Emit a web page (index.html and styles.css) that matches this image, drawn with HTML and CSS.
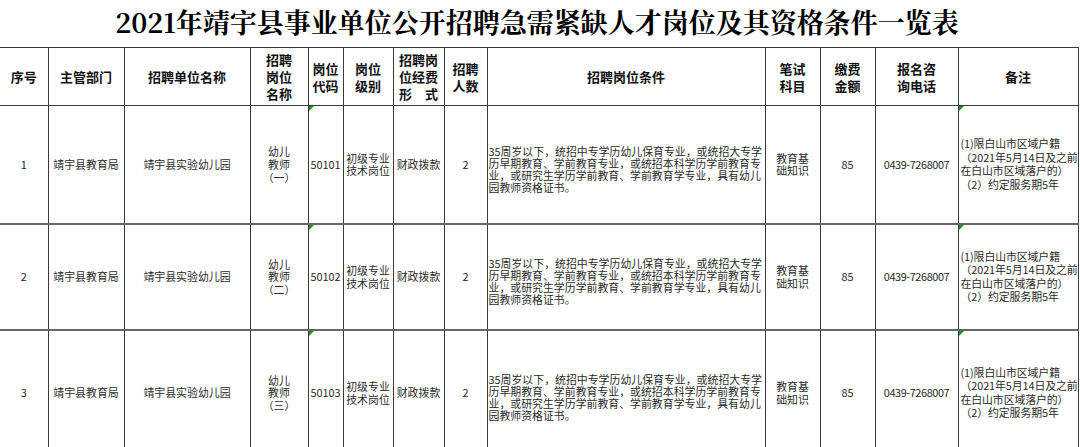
FILE: index.html
```html
<!DOCTYPE html>
<html lang="zh-CN">
<head>
<meta charset="utf-8">
<title>2021年靖宇县事业单位公开招聘急需紧缺人才岗位及其资格条件一览表</title>
<link rel="stylesheet" href="styles.css">
</head>
<body>
<div class="sheet">
  <h1 class="title">2021年靖宇县事业单位公开招聘急需紧缺人才岗位及其资格条件一览表</h1>
  <table class="grid">
    <colgroup>
      <col class="c-no"><col class="c-dept"><col class="c-unit"><col class="c-pos"><col class="c-code"><col class="c-level"><col class="c-fund"><col class="c-num"><col class="c-cond"><col class="c-exam"><col class="c-fee"><col class="c-tel"><col class="c-note">
    </colgroup>
    <thead>
      <tr class="head">
        <th class="first">序号</th>
        <th>主管部门</th>
        <th class="gl">招聘单位名称</th>
        <th class="gl">招聘<br>岗位<br>名称</th>
        <th>岗位<br>代码</th>
        <th>岗位<br>级别</th>
        <th class="gl">招聘岗<br>位经费<br>形&emsp;式</th>
        <th class="gl">招聘<br>人数</th>
        <th class="gl">招聘岗位条件</th>
        <th class="gl">笔试<br>科目</th>
        <th>缴费<br>金额</th>
        <th>报名咨<br>询电话</th>
        <th>备注</th>
      </tr>
    </thead>
    <tbody>
      <tr class="r1">
        <td class="first">1</td>
        <td>靖宇县教育局</td>
        <td class="gl">靖宇县实验幼儿园</td>
        <td class="gl">幼儿<br>教师<br>（一）</td>
        <td class="mark">50101</td>
        <td>初级专业<br>技术岗位</td>
        <td class="gl">财政拨款</td>
        <td class="gl">2</td>
        <td class="gl left cond">35周岁以下，统招中专学历幼儿保育专业，或统招大专学<br>历早期教育、学前教育专业，或统招本科学历学前教育专<br>业，或研究生学历学前教育、学前教育学专业，具有幼儿<br>园教师资格证书。</td>
        <td class="gl">教育基<br>础知识</td>
        <td>85</td>
        <td class="tel">0439-7268007</td>
        <td class="left note mark">(1)限白山市区域户籍<br>（2021年5月14日及之前<br>在白山市区域落户的）<br>（2）约定服务期5年</td>
      </tr>
      <tr class="r2">
        <td class="first">2</td>
        <td>靖宇县教育局</td>
        <td class="gl">靖宇县实验幼儿园</td>
        <td class="gl">幼儿<br>教师<br>（二）</td>
        <td class="mark">50102</td>
        <td>初级专业<br>技术岗位</td>
        <td class="gl">财政拨款</td>
        <td class="gl">2</td>
        <td class="gl left cond">35周岁以下，统招中专学历幼儿保育专业，或统招大专学<br>历早期教育、学前教育专业，或统招本科学历学前教育专<br>业，或研究生学历学前教育、学前教育学专业，具有幼儿<br>园教师资格证书。</td>
        <td class="gl">教育基<br>础知识</td>
        <td>85</td>
        <td class="tel">0439-7268007</td>
        <td class="left note mark">(1)限白山市区域户籍<br>（2021年5月14日及之前<br>在白山市区域落户的）<br>（2）约定服务期5年</td>
      </tr>
      <tr class="r3">
        <td class="first">3</td>
        <td>靖宇县教育局</td>
        <td class="gl">靖宇县实验幼儿园</td>
        <td class="gl">幼儿<br>教师<br>（三）</td>
        <td class="mark">50103</td>
        <td>初级专业<br>技术岗位</td>
        <td class="gl">财政拨款</td>
        <td class="gl">2</td>
        <td class="gl left cond">35周岁以下，统招中专学历幼儿保育专业，或统招大专学<br>历早期教育、学前教育专业，或统招本科学历学前教育专<br>业，或研究生学历学前教育、学前教育学专业，具有幼儿<br>园教师资格证书。</td>
        <td class="gl">教育基<br>础知识</td>
        <td>85</td>
        <td class="tel">0439-7268007</td>
        <td class="left note mark">(1)限白山市区域户籍<br>（2021年5月14日及之前<br>在白山市区域落户的）<br>（2）约定服务期5年</td>
      </tr>
    </tbody>
  </table>
</div>
</body>
</html>
```

FILE: styles.css
```css
html, body {
  margin: 0;
  padding: 0;
  background: #ffffff;
}
body {
  width: 1080px;
  height: 447px;
  overflow: hidden;
  font-family: "Noto Sans CJK SC", "Noto Sans", sans-serif;
  color: #222;
  text-spacing-trim: space-all;
}
.sheet {
  width: 1080px;
}
.title {
  margin: 0;
  height: 47px;
  box-sizing: border-box;
  padding-bottom: 5px;
  padding-right: 6px;
  display: flex;
  align-items: center;
  justify-content: center;
  font-family: "Noto Serif CJK SC", "Liberation Serif", "Noto Sans CJK SC", serif;
  font-size: 27px;
  font-weight: 700;
  color: #000;
}
.grid {
  width: 1078px;
  border-collapse: collapse;
  table-layout: fixed;
}
.c-no { width: 48px; }
.c-dept { width: 76px; }
.c-unit { width: 126px; }
.c-pos { width: 58px; }
.c-code { width: 35px; }
.c-level { width: 50px; }
.c-fund { width: 51px; }
.c-num { width: 43px; }
.c-cond { width: 278px; }
.c-exam { width: 55px; }
.c-fee { width: 55px; }
.c-tel { width: 83px; }
.c-note { width: 120px; }

.grid th, .grid td {
  border: 1px solid #3a3a3a;
  padding: 0;
  text-align: center;
  vertical-align: middle;
  overflow: hidden;
  white-space: nowrap;
}
.grid th.first, .grid td.first {
  border-left: none;
}
.grid th.gl, .grid td.gl {
  border-left: 1px solid #555;
}
.head {
  height: 58px;
}
.head th {
  font-size: 13px;
  line-height: 17px;
  font-weight: 700;
  color: #111;
}
.grid td {
  font-size: 10.9px;
  line-height: 12.6px;
  color: #2a2a2a;
}
.r1 { height: 118px; }
.r2 { height: 106px; }
.r3 { height: 126px; }
.r2 td, .r3 td {
  border-top: 2px solid #666;
}
.grid td.left {
  text-align: left;
}
.grid td.cond {
  padding-left: 1px;
  line-height: 12px;
  padding-top: 9px;
}
.grid td.note {
  padding-left: 2px;
  line-height: 13.4px;
  letter-spacing: -0.1px;
}
.grid td.tel {
  letter-spacing: -0.4px;
}
.grid td.mark {
  position: relative;
}
.grid td.mark::before {
  content: "";
  position: absolute;
  left: 0;
  top: 0;
  width: 0;
  height: 0;
  border-top: 5px solid #1f8f1f;
  border-right: 5px solid transparent;
}
```
